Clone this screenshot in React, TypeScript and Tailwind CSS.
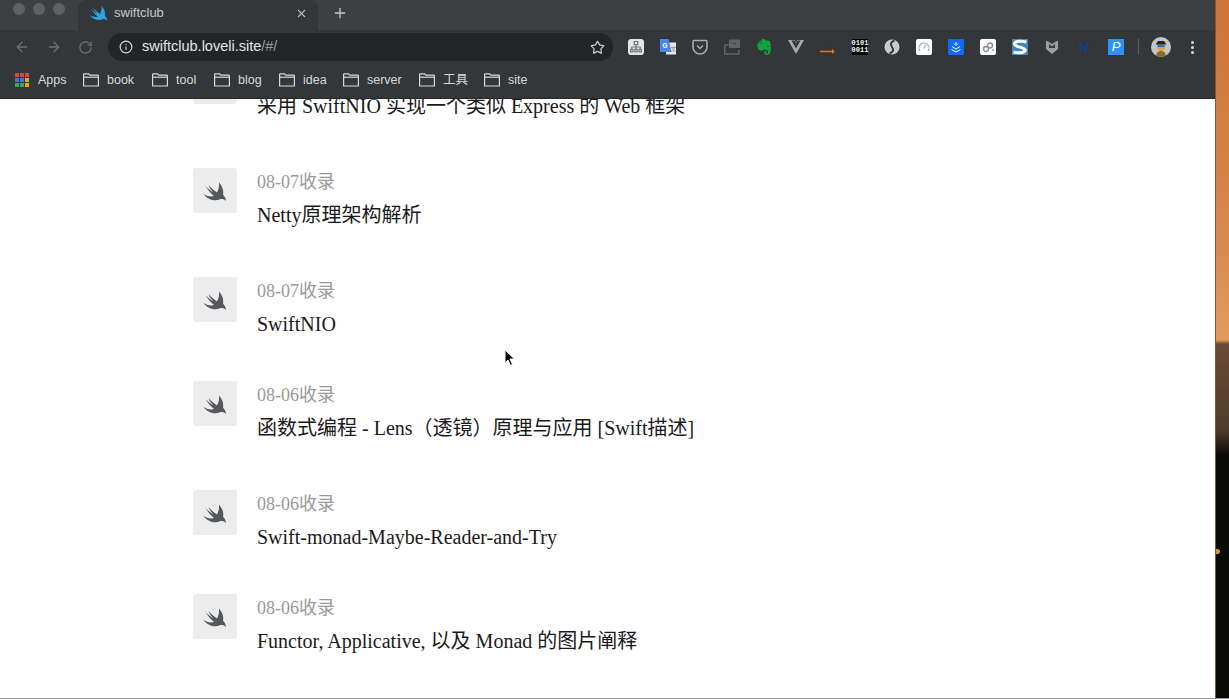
import React from 'react';
import { ArrowLeft, ArrowRight, RotateCw, Info, Star, X, Plus } from 'lucide-react';
import { SiEvernote, SiVuedotjs } from 'react-icons/si';

const serif = '[font-family:"Liberation_Serif","Noto_Sans_CJK_SC",serif]';

const SwiftBird = ({ size, color, className }: { size: number; color: string; className?: string }) => (
  <svg width={size} height={size} viewBox="0 0 24 20" className={className}>
    <path
      d="M16 .5C19.500 4.500 21 9 20 12.500C21.500 14.500 23 16.500 23 19C21 17 18.500 16.500 16.500 17.500C12 19.500 5 18 .5 12C4.500 14.500 8.500 15 11 14C7.500 11 4.500 7.500 2.500 4C5.500 7 8.500 9.500 10.500 10.800C8.500 8.500 6.500 6 5.500 3C8 6 11.500 9 14 10.500C15.500 7.500 16.500 4 16 .5Z"
      fill={color}
    />
  </svg>
);

const FolderIcon = () => (
  <svg width="16" height="14" viewBox="0 0 16 14" fill="none" stroke="#d8d9da" strokeWidth="1.200" className="shrink-0">
    <path d="M.6 13V1.600c0-.5.3-.8.800-.8h4.200l1.200 1.400h7.800c.5 0 .8.300.8.800V13z" />
    <path d="M.6 4.200h14.800" />
  </svg>
);

const AppsGrid = () => {
  const colors = ['#e2453a', '#e2453a', '#e2453a', '#3b78e7', '#3b78e7', '#e2a33a', '#34a853', '#34a853', '#f0a500'];
  return (
    <div className="grid h-[14px] w-[14px] shrink-0 grid-cols-3 gap-px">
      {colors.map((c, i) => (
        <span key={i} style={{ backgroundColor: c }} />
      ))}
    </div>
  );
};

const bookmarks = [
  { label: 'book', w: 'w-[69px]' },
  { label: 'tool', w: 'w-[62px]' },
  { label: 'blog', w: 'w-[65px]' },
  { label: 'idea', w: 'w-[64px]' },
  { label: 'server', w: 'w-[76px]' },
  { label: '工具', w: 'w-[65px]' },
  { label: 'site', w: 'w-[60px]' },
];

// toolbar extension icons, 32px pitch
const extensions: React.ReactNode[] = [
  <div className="flex h-4 w-4 items-center justify-center rounded-[3px] bg-[#e4e4e4]">
    <svg width="12" height="12" viewBox="0 0 10 10" fill="none" stroke="#777" strokeWidth="1">
      <rect x="3.500" y="0.500" width="3" height="2.500" />
      <path d="M5 3v2M1.500 7V5h7v2M5 5v2" />
      <rect x="0.500" y="7" width="2" height="2" />
      <rect x="4" y="7" width="2" height="2" />
      <rect x="7.500" y="7" width="2" height="2" />
    </svg>
  </div>,
  <svg width="16" height="16" viewBox="0 0 16 16">
    <rect x="6" y="3.500" width="10" height="12" fill="#e8e8e8" />
    <path d="M0 0h8.500l3 13H0z" fill="#4a86e8" />
    <text x="2.400" y="8.600" fontSize="6.500" fontWeight="700" fill="#fff" fontFamily="Liberation Sans">G</text>
    <text x="10.500" y="11.500" fontSize="6" fill="#777" fontFamily="Noto Sans CJK SC">文</text>
  </svg>,
  <svg width="16" height="16" viewBox="0 0 16 16" fill="none" stroke="#a9abad" strokeWidth="1.600">
    <path d="M1 2.500c0-.6.400-1 1-1h12c.6 0 1 .4 1 1V8a7 7 0 0 1-14 0z" />
    <path d="M5 6.500l3 3 3-3" strokeWidth="1.400" />
  </svg>,
  <svg width="16" height="16" viewBox="0 0 16 16">
    <path d="M.8 6v9h14V11M.8 6h4" fill="none" stroke="#626467" strokeWidth="1.500" />
    <rect x="5" y="0.500" width="11" height="8.500" rx="1" fill="#626467" />
    <path d="M8.500 3.500l2 2 2-2" fill="none" stroke="#36393c" strokeWidth="1" />
  </svg>,
  <SiEvernote size={16} color="#12a53a" />,
  <SiVuedotjs size={16} color="#a6a8aa" />,
  <svg width="16" height="16" viewBox="0 0 16 16">
    <path d="M3 1h9M6 1v10M9.500 1v10" stroke="#2a3640" strokeWidth="2" fill="none" />
    <path d="M0 12.500h12" stroke="#e8741e" strokeWidth="1.500" />
    <path d="M12 10l3 2.500-3 2.500z" fill="#e8741e" />
  </svg>,
  <div className="flex h-4 w-4 flex-col items-center justify-center bg-black text-[7px] leading-[7.500px] font-bold text-white [font-family:'Liberation_Mono',monospace]">
    <span>0101</span>
    <span>0011</span>
  </div>,
  <svg width="16" height="16" viewBox="0 0 16 16">
    <circle cx="8" cy="8" r="7.500" fill="#c9cacb" />
    <path d="M10.500 1.500C6.500 3 6 5.500 8 8s1.500 5-2.500 6.500" stroke="#36393c" strokeWidth="2" fill="none" />
  </svg>,
  <div className="flex h-4 w-4 items-center justify-center rounded-[2px] bg-white">
    <svg width="12" height="12" viewBox="0 0 12 12" fill="none" stroke="#aaa" strokeWidth="1.200">
      <path d="M2 10a5 5 0 1 1 8 0" />
      <path d="M6 7.500L7.500 4" />
    </svg>
  </div>,
  <div className="flex h-4 w-4 items-center justify-center rounded-[1px] bg-[#0f6cf2]">
    <svg width="12" height="12" viewBox="0 0 12 12" fill="none" stroke="#fff" strokeWidth="1">
      <path d="M6 1v2M4 2.500L6 4.500l2-2M2 5.500l4 2.500 4-2.500M1.500 8.500L6 11l4.500-2.500" />
    </svg>
  </div>,
  <div className="flex h-4 w-4 items-center justify-center rounded-[2px] bg-white">
    <svg width="13" height="13" viewBox="0 0 13 13" fill="none" stroke="#888" strokeWidth="1.300">
      <circle cx="4" cy="8" r="2.500" />
      <circle cx="8" cy="4.500" r="2.500" />
      <path d="M11 8v2" />
    </svg>
  </div>,
  <div className="flex h-4 w-4 items-center justify-center bg-[#3f86c0]">
    <svg width="16" height="16" viewBox="0 0 16 16">
      <path d="M14.500 3C9 1.500 2.500 2 2.500 5s9 3 10.500 5.500S8 15 1.500 13" fill="none" stroke="#fff" strokeWidth="3" />
    </svg>
  </div>,
  <svg width="14" height="16" viewBox="0 0 14 16">
    <path d="M1 1.500l3 1.500 3 2 3-2 3-1.500v8.500L7 15 1 10z" fill="#9b9d9f" />
    <path d="M4 5l3 2.500L10 5v4H4z" fill="#36393c" />
  </svg>,
  <div className="flex h-4 w-4 items-center justify-center text-[14px] font-bold text-[#123f7a] [font-family:'Liberation_Sans',sans-serif]">N</div>,
  <div className="flex h-4 w-4 items-center justify-center bg-[#2b93f5] text-[13px] text-white italic [font-family:'Liberation_Sans',sans-serif]">P</div>,
];

const posts = [
  { date: '', title: '采用 SwiftNIO 实现一个类似 Express 的 Web 框架', pad: 'pb-[47px]' },
  { date: '08-07收录', title: 'Netty原理架构解析', pad: 'pb-[47px]' },
  { date: '08-07收录', title: 'SwiftNIO', pad: 'pb-[42px]' },
  { date: '08-06收录', title: '函数式编程 - Lens（透镜）原理与应用 [Swift描述]', pad: 'pb-[47px]' },
  { date: '08-06收录', title: 'Swift-monad-Maybe-Reader-and-Try', pad: 'pb-[42px]' },
  { date: '08-06收录', title: 'Functor, Applicative, 以及 Monad 的图片阐释', pad: 'pb-[47px]' },
];

const App = () => {
  return (
    <div className="relative flex h-[699px] w-[1229px] overflow-hidden bg-white [font-family:'Liberation_Sans','Noto_Sans_CJK_SC',sans-serif]">
      <div className="flex h-[698px] w-[1215px] shrink-0 flex-col">
        {/* browser chrome */}
        <header className="z-10 h-[99px] shrink-0 border-b border-[#26282a] bg-[#34373a]">
          <div className="flex h-[30px] bg-[#3d4043]">
            <div className="flex w-[78px] items-start gap-2 pt-[3px] pl-[13px]">
              <span className="h-3 w-3 rounded-full bg-[#5e6164]" />
              <span className="h-3 w-3 rounded-full bg-[#5e6164]" />
              <span className="h-3 w-3 rounded-full bg-[#5e6164]" />
            </div>
            <div className="flex h-[30px] w-[240px] items-center rounded-t-lg bg-[#34373a] pr-[10px] pl-[11px]">
              <SwiftBird size={19} color="#2f9fe6" className="mb-1 shrink-0" />
              <span className="ml-[6px] flex-1 pb-1 text-[13px] text-[#c6c8ca]">swiftclub</span>
              <X size={13} color="#b8babc" className="mb-1" />
            </div>
            <Plus size={16} color="#c6c8ca" className="mt-[5px] ml-[14px]" />
          </div>

          <div className="flex h-[34px] items-center">
            <div className="flex w-[108px] items-center gap-4 pl-[14px]">
              <ArrowLeft size={16} color="#6d7073" />
              <ArrowRight size={16} color="#6d7073" />
              <RotateCw size={15} color="#6d7073" />
            </div>
            <div className="flex h-7 w-[505px] items-center rounded-full bg-[#222528] pr-2 pl-[11px]">
              <Info size={14} color="#d8d9da" />
              <span className="ml-[9px] flex-1 text-[14.500px] text-[#e4e5e6]">
                swiftclub.loveli.site<span className="text-[#9a9c9e]">/#/</span>
              </span>
              <Star size={15} color="#c9cacb" />
            </div>
            <div className="ml-[7px] flex items-center">
              {extensions.map((icon, i) => (
                <div key={i} className="flex w-8 justify-center">
                  {icon}
                </div>
              ))}
            </div>
            <div className="ml-[6px] h-4 w-px bg-[#5e6164]" />
            <div className="ml-3 flex h-5 w-5 items-center justify-center overflow-hidden rounded-full bg-[#c4c4c4]">
              <svg width="20" height="20" viewBox="0 0 20 20">
                <path d="M5 20c0-4 2-6 5-6s5 2 5 6z" fill="#8a6a2a" />
                <circle cx="10" cy="10" r="4" fill="#d9a441" />
                <path d="M4.500 7.500h11L13 4H7z" fill="#222" />
                <rect x="6.500" y="8" width="7" height="2" fill="#2d6fc4" />
              </svg>
            </div>
            <div className="ml-[20px] flex flex-col gap-[2px]">
              <span className="h-[3px] w-[3px] rounded-full bg-[#d8d9da]" />
              <span className="h-[3px] w-[3px] rounded-full bg-[#d8d9da]" />
              <span className="h-[3px] w-[3px] rounded-full bg-[#d8d9da]" />
            </div>
          </div>

          <div className="flex h-[32px] items-center pl-[15px] text-[12.500px] text-[#d8d9da]">
            <div className="flex w-[68px] items-center gap-[9px]">
              <AppsGrid />
              <span>Apps</span>
            </div>
            {bookmarks.map((b) => (
              <div key={b.label} className={`flex items-center gap-2 ${b.w}`}>
                <FolderIcon />
                <span>{b.label}</span>
              </div>
            ))}
          </div>
        </header>

        {/* post list, scrolled so the first row sits under the bar */}
        <main className="min-h-0 flex-1 overflow-hidden">
          <div className="mt-[-40px] flex flex-col pl-[193px]">
            {posts.map((p, i) => (
              <div key={i} className={`flex gap-5 ${p.pad}`}>
                <div className="flex h-[45px] w-11 shrink-0 items-center justify-center rounded-[3px] bg-[#ececec]">
                  <SwiftBird size={24} color="#55575a" className="mt-[2px]" />
                </div>
                <div className={`flex flex-col gap-[4px] pt-px ${serif}`}>
                  {p.date ? <span className="text-[18px] text-[#999999]">{p.date}</span> : <div className="h-[27px]" />}
                  <span className="text-[20px] text-[#1a1a1a]">{p.title}</span>
                </div>
              </div>
            ))}
          </div>
        </main>
      </div>

      {/* desktop wallpaper peeking out to the right */}
      <div className="h-[698px] w-[14px] border-l border-[#8a5228] bg-[linear-gradient(to_bottom,#c9743a_0px,#d98a4e_250px,#e39b5f_340px,#6b4a34_344px,#4f3c2c_430px,#0a0a06_455px,#0a0a06_698px)]" />
      <div className="absolute top-[549px] left-[1216px] h-[5px] w-[4px] rounded-r-full bg-[#d89a20]" />
      <div className="absolute right-0 bottom-0 left-0 h-px bg-[#9a9a9a]" />

      {/* mouse pointer */}
      <svg width="12" height="18" viewBox="0 0 12 18" className="absolute top-[349px] left-[504px]">
        <path d="M1 1v13l3-3 2.500 5.500 2-1L6 10h4.500z" fill="#000" stroke="#fff" strokeWidth="1" />
      </svg>
    </div>
  );
};

export default App;
